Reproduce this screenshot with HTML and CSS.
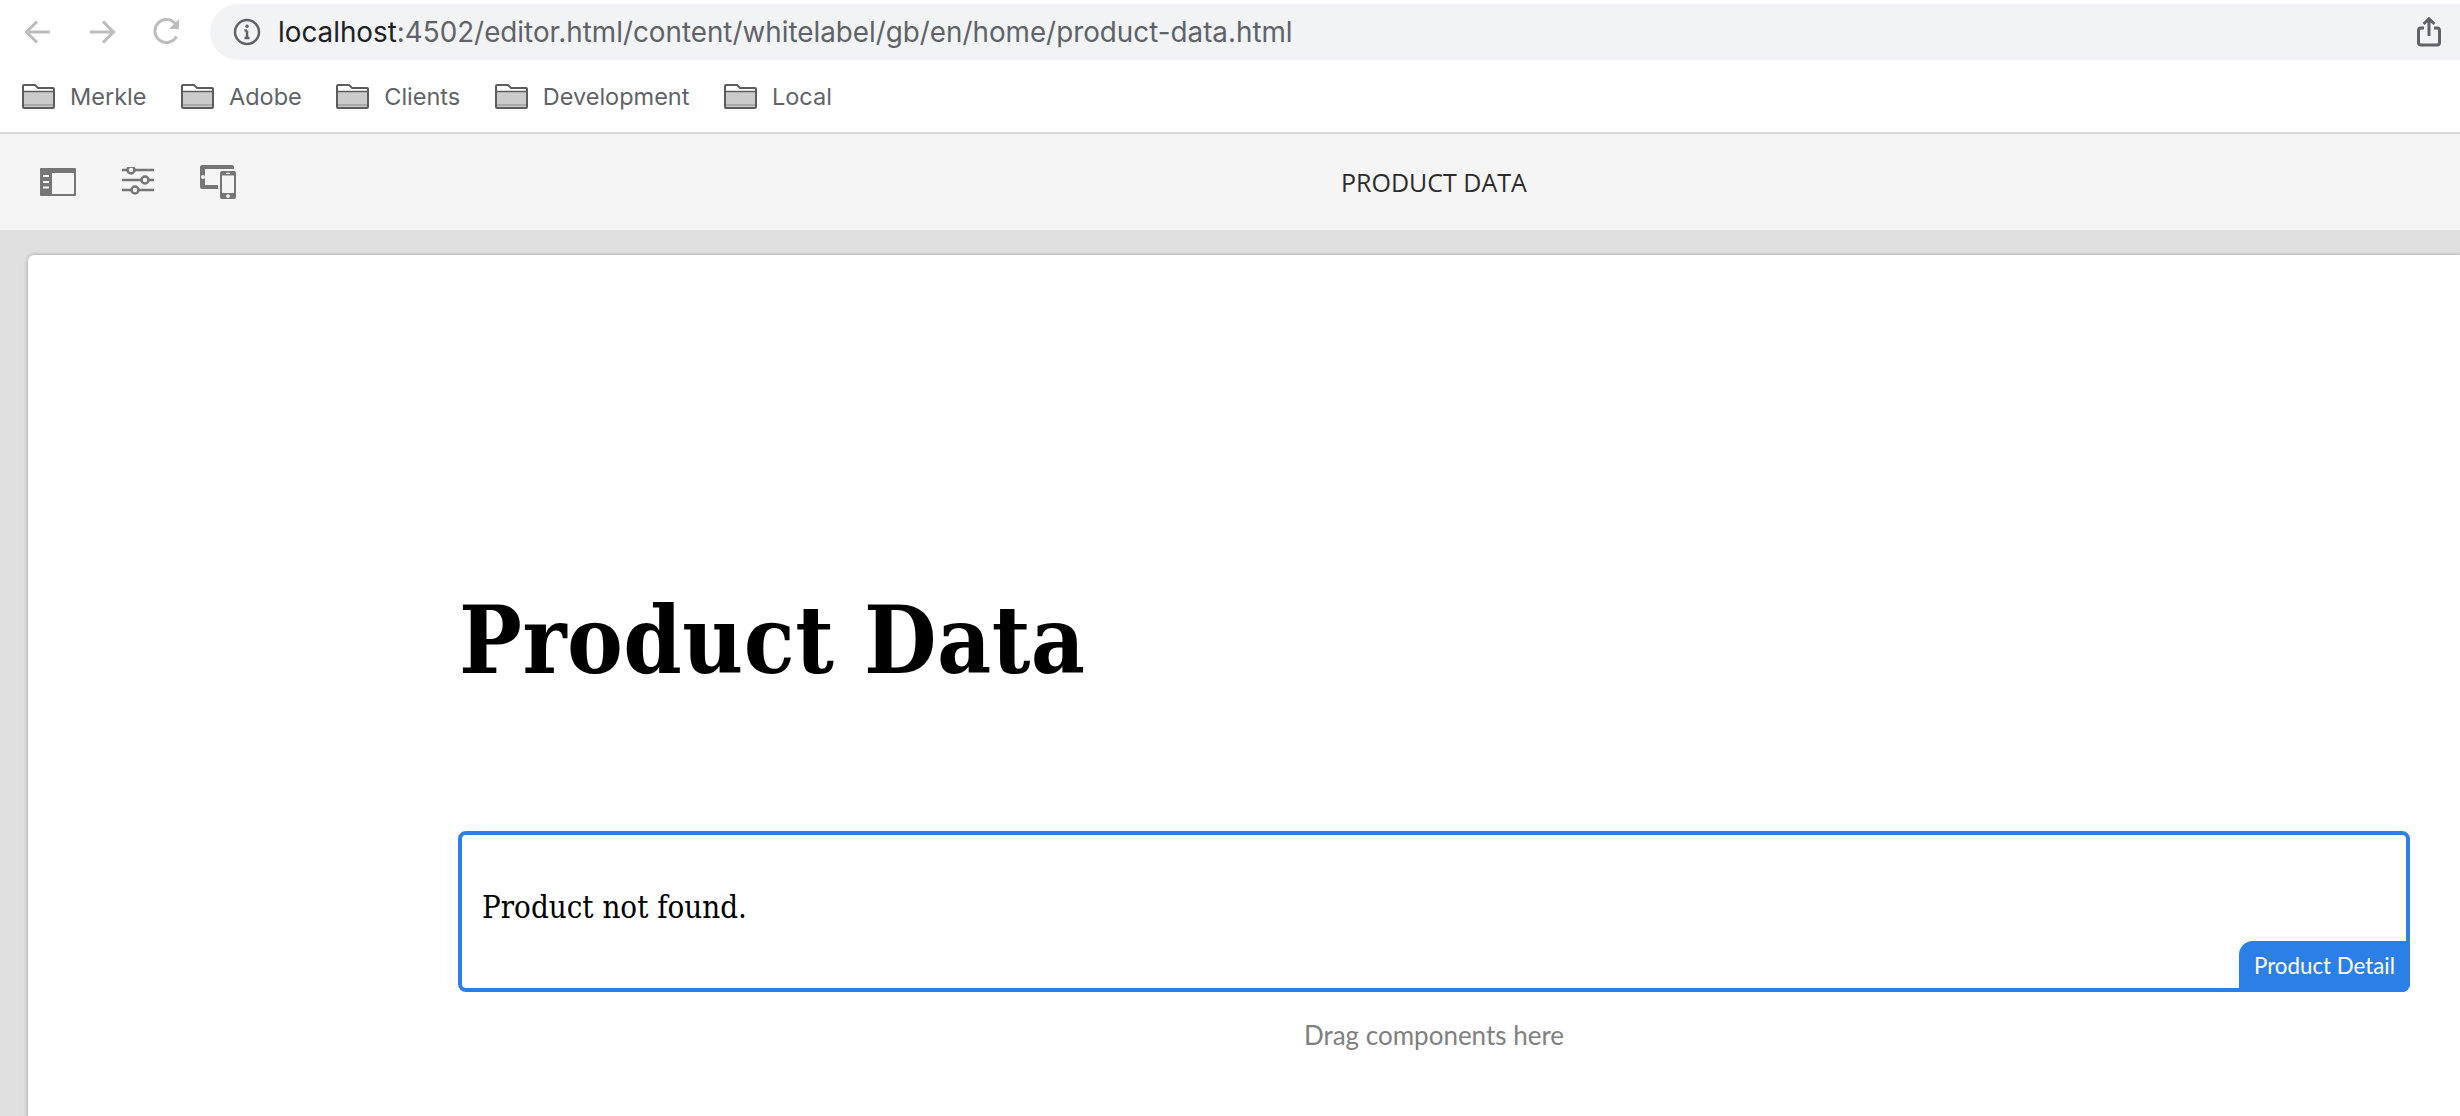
FILE: index.html
```html
<!doctype html>
<html>
<head>
<meta charset="utf-8">
<title>Product Data</title>
    <link rel="stylesheet" href="styles.css">
</head>

<body>
    <!-- browser toolbar -->
    <div class="nav-bar">
        <svg class="nav-icon" width="28" height="26" viewBox="0 0 28 26"><path d="M26 13H3M13 2.500 2.500 13 13 23.500"/></svg>
        <svg class="nav-icon" width="28" height="26" viewBox="0 0 28 26"><path d="M2 13h23M15 2.500 25.500 13 15 23.500"/></svg>
        <svg class="nav-icon reload" width="30" height="28" viewBox="0 0 30 28"><path d="M24.500 18.500A11.500 11.500 0 1 1 23.500 6"/><path class="solid" d="M27 1v10H17z"/></svg>
        <div class="omnibox">
            <svg class="info" width="28" height="28" viewBox="0 0 28 28"><circle cx="14" cy="14" r="12"/><path d="M14 12.500V20M11.500 20h5M11.500 12.500H14"/><circle class="solid" cx="14" cy="8.300" r="1.700"/></svg>
            <span class="url"><b>localhost</b>:4502/editor.html/content/whitelabel/gb/en/home/product-data.html</span>
            <svg class="share" width="24" height="30" viewBox="0 0 24 30"><path d="M7 11H4a2.500 2.500 0 0 0-2.500 2.500v12A2.500 2.500 0 0 0 4 28h16a2.500 2.500 0 0 0 2.500-2.500v-12A2.500 2.500 0 0 0 20 11h-3"/><path d="M12 19V2M6.500 7 12 1.800 17.500 7"/></svg>
        </div>
    </div>

    <!-- bookmarks -->
    <div class="bookmarks">
        <a class="mark"><svg class="folder" width="33" height="25" viewBox="0 0 33 25"><use href="#folder"/></svg>Merkle</a>
        <a class="mark"><svg class="folder" width="33" height="25" viewBox="0 0 33 25"><use href="#folder"/></svg>Adobe</a>
        <a class="mark"><svg class="folder" width="33" height="25" viewBox="0 0 33 25"><use href="#folder"/></svg>Clients</a>
        <a class="mark"><svg class="folder" width="33" height="25" viewBox="0 0 33 25"><use href="#folder"/></svg>Development</a>
        <a class="mark"><svg class="folder" width="33" height="25" viewBox="0 0 33 25"><use href="#folder"/></svg>Local</a>
    </div>

    <!-- editor toolbar -->
    <div class="editor-bar">
        <svg class="tool side" width="36" height="28" viewBox="0 0 36 28"><path fill-rule="evenodd" d="M1 0h34a1 1 0 0 1 1 1v26a1 1 0 0 1-1 1H1a1 1 0 0 1-1-1V1a1 1 0 0 1 1-1zM12 5v21h22V5zM3 7v2h6V7zM3 13v2h6v-2zM3 18.500v2h6v-2z"/></svg>
        <svg class="tool sliders" width="32" height="30" viewBox="0 0 32 30"><path d="M0 3h5M13 3h19M0 13h19M27 13h5M0 23h9M17 23h15"/><circle cx="9" cy="3" r="3.500"/><circle cx="23" cy="13" r="3.500"/><circle cx="13" cy="23" r="3.500"/></svg>
        <svg class="tool devices" width="36" height="34" viewBox="0 0 36 34"><path fill-rule="evenodd" d="M2 0h30a2 2 0 0 1 2 2v2H5v16h13v4H2a2 2 0 0 1-2-2V2a2 2 0 0 1 2-2zM3 10a2 2 0 1 0 0 4 2 2 0 0 0 0-4z"/><path fill-rule="evenodd" d="M22 6h12a2 2 0 0 1 2 2v24a2 2 0 0 1-2 2H22a2 2 0 0 1-2-2V8a2 2 0 0 1 2-2zM22 10.500V28h12V10.500zM26 7.800v1.200h4V7.800zM28 29.200a1.900 1.900 0 1 0 0 3.800 1.900 1.900 0 0 0 0-3.800z"/></svg>
        <span class="page-name">PRODUCT DATA</span>
    </div>

    <!-- page canvas -->
    <div class="stage">
        <div class="page">
            <h1>Product Data</h1>
            <div class="component">
                <p>Product not found.</p>
                <span class="tag">Product Detail</span>
            </div>
            <div class="drop">Drag components here</div>
        </div>
    </div>

    <svg class="defs" width="0" height="0">
        <symbol id="folder" viewBox="0 0 33 25">
            <path d="M2 1h11l3 3h15a1 1 0 0 1 1 1v18a1 1 0 0 1-1 1H2a1 1 0 0 1-1-1V2a1 1 0 0 1 1-1z" fill="#cbcbcb" stroke="#5c5c5c" stroke-width="2"/>
            <path d="M2 2h10.500l3 3H31v2.500H2z" fill="#fff"/>
            <path d="M2 7.500h29" stroke="#5c5c5c" stroke-width="1.500"/>
            <path d="M2 21h29" stroke="#a9a9a9" stroke-width="2"/>
        </symbol>
    </svg>
</body>
</html>
```

FILE: styles.css
```css
html, body {
    margin: 0;
    padding: 0;
    height: 1116px;
    overflow: hidden;
    background: #fff;
}

/* browser toolbar */
.nav-bar {
    display: flex;
    align-items: center;
    height: 56px;
    padding: 4px 0 0 24px;
}
.nav-icon {
    flex: none;
    margin-right: 36px;
    fill: none;
    stroke: #bdbdbd;
    stroke-width: 3;
}
.nav-icon .solid {
    fill: #bdbdbd;
    stroke: none;
}
.nav-icon.reload {
    margin-right: 28px;
}
.omnibox {
    flex: 1;
    display: flex;
    align-items: center;
    height: 56px;
    padding-left: 23px;
    border-radius: 28px 0 0 28px;
    background: #f1f3f4;
}
.info {
    flex: none;
    fill: none;
    stroke: #5f6368;
    stroke-width: 2.500;
}
.info .solid {
    fill: #5f6368;
    stroke: none;
}
.url {
    flex: 1;
    margin-left: 17px;
    font-family: "Inter", "Liberation Sans", sans-serif;
    font-size: 27.800px;
    color: #5f6368;
}
.url b {
    font-weight: 400;
    color: #202124;
}
.share {
    flex: none;
    margin-right: 19px;
    fill: none;
    stroke: #5f6368;
    stroke-width: 3;
}

/* bookmarks */
.bookmarks {
    display: flex;
    align-items: center;
    gap: 34.500px;
    height: 72px;
    padding-left: 22px;
    border-bottom: 2px solid #d9d9d9;
}
.mark {
    display: flex;
    align-items: center;
    gap: 15px;
    font-family: "Inter", "Liberation Sans", sans-serif;
    font-size: 23.500px;
    color: #5f6368;
}
.folder {
    flex: none;
}

/* editor toolbar */
.editor-bar {
    display: flex;
    align-items: center;
    height: 96px;
    padding-left: 40px;
    background: #f5f5f5;
}
.tool {
    flex: none;
    fill: #767676;
}
.sliders {
    margin-left: 46px;
    fill: none;
    stroke: #767676;
    stroke-width: 2.500;
}
.devices {
    margin-left: 46px;
}
.page-name {
    margin-left: 1105px;
    font-family: "Open Sans", sans-serif;
    font-size: 25px;
    color: #2c2c2c;
}

/* page canvas */
.stage {
    height: 886px;
    padding: 25px 0 0 28px;
    background: #e0e0e0;
}
.page {
    height: 900px;
    padding: 1px 50px 0 430px;
    border-radius: 6px 0 0 0;
    background: #fff;
    box-shadow: 0 0 4px rgba(0, 0, 0, 0.3);
}
h1 {
    margin: 325px 0 130px 1px;
    font-family: "DejaVu Serif Condensed", "DejaVu Serif", serif;
    font-stretch: condensed;
    font-weight: 700;
    font-size: 93px;
    line-height: 120px;
    letter-spacing: 0.500px;
    color: #000;
}
.component {
    position: relative;
    box-sizing: border-box;
    height: 161px;
    padding: 50px 20px 0;
    border: 4px solid #2c7fe6;
    border-radius: 8px;
}
.component p {
    margin: 0;
    font-family: "DejaVu Serif Condensed", "DejaVu Serif", serif;
    font-stretch: condensed;
    font-size: 31px;
    line-height: 44px;
    color: #000;
}
.tag {
    position: absolute;
    right: -4px;
    bottom: -4px;
    width: 171px;
    height: 51px;
    line-height: 49px;
    text-align: center;
    border-radius: 14px 0 8px 0;
    background: #2c7fe6;
    font-family: "Lato", sans-serif;
    font-size: 22.300px;
    color: #fff;
}
.drop {
    margin-top: 25px;
    text-align: center;
    font-family: "Lato", sans-serif;
    font-size: 26px;
    line-height: 36px;
    color: #808080;
}
.defs {
    position: absolute;
}
```
